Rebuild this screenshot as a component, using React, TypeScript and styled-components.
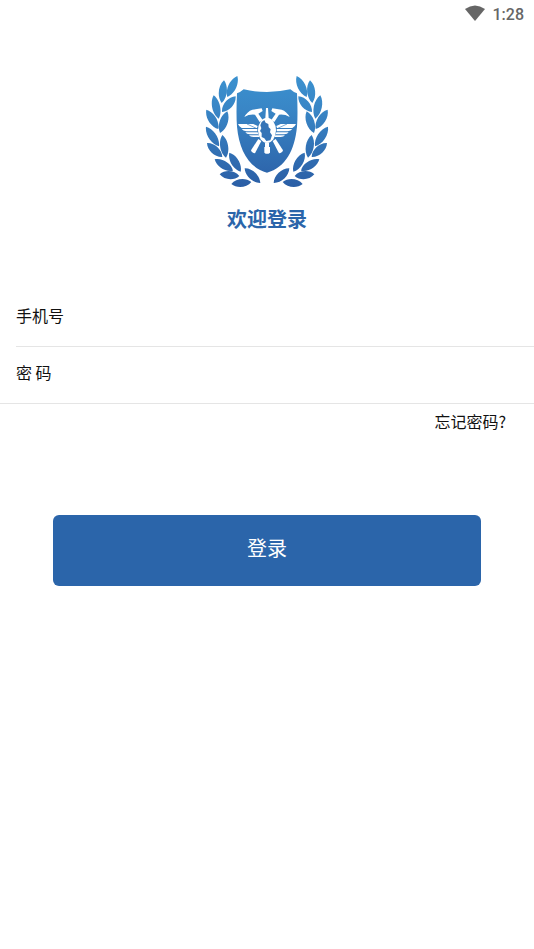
import React from "react";
import styled, { createGlobalStyle } from "styled-components";

const GlobalStyle = createGlobalStyle`
  *, *::before, *::after { box-sizing: border-box; }
  body {
    margin: 0;
    background: #ffffff;
    color: #111111;
    font-family: "Noto Sans CJK SC", "Noto Sans", sans-serif;
    font-size: 16px;
    line-height: 24px;
  }
  input, button { font: inherit; color: inherit; }
`;

const Screen = styled.div`
  display: flex;
  flex-direction: column;
  min-height: 100vh;
`;

const StatusBar = styled.header`
  display: flex;
  align-items: flex-start;
  justify-content: flex-end;
  gap: 8px;
  height: 28px;
  padding: 3px 10px 0 0;
  color: #666666;
  font-family: Roboto, sans-serif;
  font-size: 16px;
  font-weight: 500;
`;

const WifiIcon = styled.svg`
  width: 20px;
  height: 20px;
`;

const Brand = styled.section`
  display: flex;
  flex-direction: column;
  align-items: center;
  gap: 9px;
  padding-top: 38px;
`;

const Logo = styled.svg`
  width: 140px;
  height: 130px;
`;

const Title = styled.h1`
  margin: 0;
  color: #2b65aa;
  font-size: 20px;
  font-weight: 700;
  line-height: 28px;
`;

const Form = styled.form`
  display: flex;
  flex-direction: column;
  padding-top: 57px;
`;

const Field = styled.div<{ $inset?: boolean }>`
  display: flex;
  align-items: center;
  height: 57px;
  margin-left: ${(p) => (p.$inset ? "16px" : "0")};
  padding-left: ${(p) => (p.$inset ? "0" : "16px")};
  padding-bottom: 6px;
  border-bottom: 1px solid #e5e5e5;
`;

const Label = styled.label`
  flex: 0 0 88px;
`;

const Input = styled.input`
  flex: 1;
  min-width: 0;
  height: 40px;
  padding: 0;
  border: 0;
  outline: 0;
  background: transparent;
`;

const ForgotLink = styled.a`
  align-self: flex-end;
  margin: 5px 28px 0 0;
  color: inherit;
  text-decoration: none;
`;

const SubmitButton = styled.button`
  width: 80%;
  height: 71px;
  margin: 82px auto 0;
  padding: 0 0 6px;
  border: 0;
  border-radius: 6px;
  background: #2b65aa;
  color: #ffffff;
  font-size: 20px;
  cursor: pointer;
`;

type Leaf = [number, number, number, number];

const leaves: Leaf[] = [
  [121, 30, 91, 93],
  [81, 43, 74, 111],
  [116, 91, 75, 138],
  [50, 88, 65, 158],
  [91, 136, 69, 201],
  [28, 131, 64, 189],
  [27, 182, 66, 241],
  [76, 207, 87, 275],
  [30, 231, 76, 273],
  [97, 260, 131, 317],
  [53, 280, 108, 314],
  [68, 325, 127, 330],
  [143, 307, 190, 351],
  [103, 354, 163, 348],
];

function leafPath([x1, y1, x2, y2]: Leaf): string {
  const dx = x2 - x1;
  const dy = y2 - y1;
  const length = Math.hypot(dx, dy);
  const nx = (-dy / length) * 16;
  const ny = (dx / length) * 16;
  const point = (t: number, side: number) =>
    `${(x1 + dx * t + nx * side).toFixed(1)} ${(y1 + dy * t + ny * side).toFixed(1)}`;
  return `M${x1} ${y1}C${point(0.25, 1)} ${point(0.75, 1)} ${x2} ${y2}C${point(0.75, -1)} ${point(0.25, -1)} ${x1} ${y1}Z`;
}

const laurel = leaves.map(leafPath).join("");

function Emblem() {
  return (
    <Logo viewBox="0 0 420 390" aria-hidden="true">
      <defs>
        <linearGradient id="blue" gradientUnits="userSpaceOnUse" x1="0" y1="30" x2="0" y2="360">
          <stop offset="0" stopColor="#3b91cf" />
          <stop offset="0.3" stopColor="#3986c6" />
          <stop offset="1" stopColor="#2b5fa6" />
        </linearGradient>
      </defs>
      <g fill="url(#blue)">
        <path d={laurel} />
        <path d={laurel} transform="translate(420 0) scale(-1 1)" />
        <path d="M140 70Q210 86 280 70Q290 79 300 82Q303 145 300 182C293 252 266 304 210 320C154 304 127 252 120 182Q117 145 120 82Q130 79 140 70Z" />
      </g>
      {[false, true].map((mirrored) => (
        <g key={String(mirrored)} fill="#ffffff" transform={mirrored ? "translate(420 0) scale(-1 1)" : undefined}>
          <path d="M142 153Q151 136 166 131L194 127L197 135L184 143L197 162L188 168L174 146Q157 144 142 153Z" />
          <path d="M123 174H169L182 180L180 186H134Q126 182 123 174Z" />
          <path d="M134 189H181V196H148Q138 195 134 189Z" />
          <path d="M145 199H182L184 205H158Q149 205 145 199Z" />
          <path d="M156 208H185L188 213H169Q160 213 156 208Z" />
          <path d="M150 174L178 187" stroke="url(#blue)" strokeWidth="2" />
          <path d="M184 219L193 225L174 262Q164 261 162 253Z" />
        </g>
      ))}
      <path fill="#ffffff" d="M207 126H213L215 156H205ZM204 230H216V243H219V260Q210 267 202 260V243H204Z" />
      <ellipse cx="210" cy="193" rx="27" ry="38" fill="#ffffff" />
      <path
        fill="#3574b7"
        d="M194 168L202 162L206 170L214 174L215 184L221 190L219 199L225 208L220 223L208 225L202 217L194 213V201L189 195L193 187L190 178Z"
      />
    </Logo>
  );
}

export default function App() {
  return (
    <>
      <GlobalStyle />
      <Screen>
        <StatusBar>
          <WifiIcon viewBox="0 0 20 20" aria-hidden="true">
            <path d="M0 6Q10 -1 20 6L10 18Z" fill="#666666" />
          </WifiIcon>
          <time>1:28</time>
        </StatusBar>
        <main>
          <Brand>
            <Emblem />
            <Title>欢迎登录</Title>
          </Brand>
          <Form onSubmit={(event) => event.preventDefault()}>
            <Field $inset>
              <Label htmlFor="phone">手机号</Label>
              <Input id="phone" type="tel" autoComplete="tel" />
            </Field>
            <Field>
              <Label htmlFor="password">密 码</Label>
              <Input id="password" type="password" autoComplete="current-password" />
            </Field>
            <ForgotLink href="#forgot">忘记密码?</ForgotLink>
            <SubmitButton type="submit">登录</SubmitButton>
          </Form>
        </main>
      </Screen>
    </>
  );
}
